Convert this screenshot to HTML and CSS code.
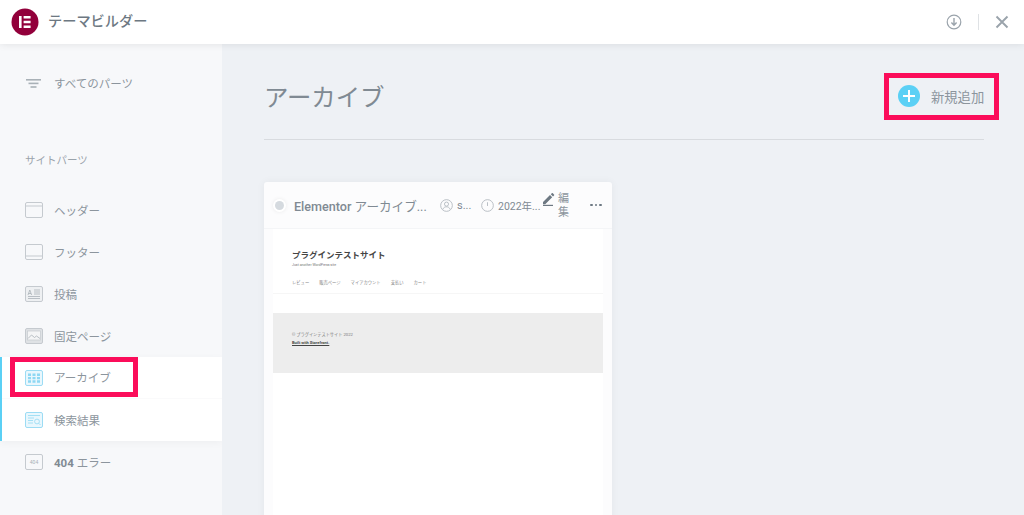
FILE: index.html
```html
<!DOCTYPE html>
<html lang="ja">
<head>
    <meta charset="UTF-8">
    <meta name="viewport" content="width=device-width, initial-scale=1.0">
    <title>テーマビルダー</title>
    <link rel="stylesheet" href="styles.css">
</head>
<body>
    <header class="topbar">
        <div class="logo">
            <svg viewBox="0 0 28 28" width="28" height="28"><circle cx="14" cy="14" r="13.5" fill="#92003b"/><path d="M8 8h2.600v12H8zM12.600 8h7v2.400h-7zM12.600 12.800h7v2.400h-7zM12.600 17.600h7V20h-7z" fill="#fff"/></svg>
        </div>
        <div class="topbar-title">テーマビルダー</div>
        <div class="topbar-actions">
            <svg viewBox="0 0 16 16" width="16" height="16" fill="none" stroke="#9aa3ab" stroke-width="1.2"><circle cx="8" cy="8" r="6.8"/><path d="M8 4v7M5.4 8.6 8 11.2l2.6-2.6" stroke-width="1.4"/></svg>
            <span class="topbar-sep"></span>
            <svg viewBox="0 0 14 14" width="14" height="14" fill="none" stroke="#9aa3ab" stroke-width="1.9"><path d="M1.5 1.5l11 11M12.5 1.5l-11 11"/></svg>
        </div>
    </header>

    <div class="layout">
        <aside class="sidebar">
            <div class="all-parts">
                <svg class="icon-filter" viewBox="0 0 15 9" width="15" height="9" fill="#a9b1b7"><rect x="0" y="0" width="15" height="1.600"/><rect x="2.500" y="3.600" width="10" height="1.600"/><rect x="4.500" y="7.200" width="6" height="1.600"/></svg>
                <span>すべてのパーツ</span>
            </div>
            <div class="side-heading">サイトパーツ</div>

            <a class="side-item">
                <svg class="side-icon" viewBox="0 0 18 16"><rect x=".5" y=".5" width="17" height="15" rx="1.5"/><path d="M.5 4h17"/></svg>
                <span>ヘッダー</span>
            </a>
            <a class="side-item">
                <svg class="side-icon" viewBox="0 0 18 16"><rect x=".5" y=".5" width="17" height="15" rx="1.5"/><path d="M.5 12h17"/></svg>
                <span>フッター</span>
            </a>
            <a class="side-item">
                <svg class="side-icon" viewBox="0 0 18 16"><rect x=".5" y=".5" width="17" height="15" rx="1.5" fill="#eef0f2"/><path d="M3 9l1.8-5 1.8 5M3.6 7.5h2.4M9 4h6M9 6h6M9 8h6M3 10.5h12M3 12.5h12" stroke="#a9b1b7" stroke-width=".8"/></svg>
                <span>投稿</span>
            </a>
            <a class="side-item">
                <svg class="side-icon" viewBox="0 0 18 16"><rect x=".5" y=".5" width="17" height="15" rx="1.5" fill="#dfe2e5"/><rect x="2.5" y="3" width="13" height="9" fill="#f4f5f6" stroke-width=".7"/><path d="M3 10.5l3.5-3.5 3 2.5 2-1.5 3.5 2.5" stroke="#a9b1b7" stroke-width=".8"/></svg>
                <span>固定ページ</span>
            </a>

            <div class="side-group">
                <div class="side-item side-item-active">
                    <svg class="side-icon side-icon-blue" viewBox="0 0 18 16"><rect x=".5" y=".5" width="17" height="15" rx="1.5" fill="#e9f7fd"/><path d="M3 3.5h3v2.4H3zM7.5 3.5h3v2.4h-3zM12 3.5h3v2.4h-3zM3 6.9h3v2.4H3zM7.5 6.9h3v2.4h-3zM12 6.9h3v2.4h-3zM3 10.3h3v2.4H3zM7.5 10.3h3v2.4h-3zM12 10.3h3v2.4h-3z" fill="#8ed8f3" stroke="none"/></svg>
                    <span>アーカイブ</span>
                    <div class="highlight highlight-side"></div>
                </div>
                <div class="side-item">
                    <svg class="side-icon side-icon-blue" viewBox="0 0 18 16"><rect x=".5" y=".5" width="17" height="15" rx="1.5" fill="#e9f7fd"/><path d="M3 3.5h12M3 6h6M3 8.500h5M3 11h5" stroke-width=".9"/><circle cx="12" cy="9.500" r="2.400" stroke-width=".9"/><path d="M13.800 11.300l1.700 1.700" stroke-width=".9"/></svg>
                    <span>検索結果</span>
                </div>
            </div>

            <a class="side-item">
                <svg class="side-icon" viewBox="0 0 18 16"><rect x=".5" y=".5" width="17" height="15" rx="1.5"/><text x="9" y="10.400" class="icon-404">404</text></svg>
                <span><b class="num">404</b> エラー</span>
            </a>
        </aside>

        <main class="content">
            <div class="content-head">
                <h1>アーカイブ</h1>
                <button class="add-btn">
                    <span class="add-circle">
                        <svg viewBox="0 0 12 12" width="12" height="12" stroke="#fff" stroke-width="2"><path d="M6 0v12M0 6h12"/></svg>
                    </span>
                    <span>新規追加</span>
                    <div class="highlight highlight-add"></div>
                </button>
            </div>

            <section class="card">
                <div class="card-head">
                    <span class="status-dot"></span>
                    <span class="card-title"><span class="latin">Elementor</span> アーカイブ...</span>
                    <svg class="meta-icon" viewBox="0 0 14 14" width="13" height="13" fill="none" stroke="#b4bbc1" stroke-width="1"><circle cx="7" cy="7" r="6.300"/><circle cx="7" cy="5.500" r="2.200"/><path d="M3 11.200c.8-2 2.200-2.800 4-2.800s3.200.8 4 2.800"/></svg>
                    <span class="meta meta-author">s...</span>
                    <svg class="meta-icon" viewBox="0 0 14 14" width="13" height="13" fill="none" stroke="#b4bbc1" stroke-width="1"><circle cx="7" cy="7" r="6.300"/><path d="M7 3.500V7.500"/></svg>
                    <span class="meta meta-date">2022年...</span>
                    <span class="edit">
                        <svg viewBox="0 0 12 13" width="12" height="13" fill="#6d7882"><path d="M0 9l7-7 2.200 2.200-7 7H0zM7.800 1.200 8.800.2a.7.7 0 0 1 1 0l1.200 1.200a.7.7 0 0 1 0 1L10 3.400z"/><rect x="0" y="11.800" width="10" height="1.200"/></svg>
                        <span class="edit-label">編集</span>
                    </span>
                    <span class="more">
                        <i></i><i></i><i></i>
                    </span>
                </div>
                <div class="preview">
                    <div class="preview-site">
                        <div class="site-title">プラグインテストサイト</div>
                        <div class="site-tag">Just another WordPress site</div>
                        <nav class="site-nav">
                            <span>レビュー</span><span>販売ページ</span><span>マイアカウント</span><span>支払い</span><span>カート</span>
                        </nav>
                    </div>
                    <div class="site-footer">
                        <div>© プラグインテストサイト 2022</div>
                        <div class="built">Built with Storefront.</div>
                    </div>
                </div>
            </section>
        </main>
    </div>
</body>
</html>
```

FILE: styles.css
```css
* {
    box-sizing: border-box;
}

html, body {
    height: 100%;
}

body {
    margin: 0;
    overflow: hidden;
    font-family: Roboto, "Noto Sans CJK JP", sans-serif;
    color: #6d7882;
    background-color: #eef1f5;
}

.topbar {
    position: relative;
    z-index: 2;
    display: flex;
    align-items: center;
    height: 44px;
    padding: 0 15px 0 11px;
    background: #fff;
    box-shadow: 0 0 8px rgba(0, 0, 0, 0.1);
}

.logo {
    display: flex;
    margin-right: 9px;
}

.topbar-title {
    margin-top: -4px;
    font-size: 14.200px;
    font-weight: 500;
    color: #6d7882;
}

.topbar-actions {
    display: flex;
    align-items: center;
    margin-left: auto;
}

.topbar-sep {
    width: 1px;
    height: 16px;
    margin: 0 16px;
    background: #dfe2e5;
}

.layout {
    display: flex;
    height: 471px;
}

.sidebar {
    flex: 0 0 222px;
    padding-top: 28px;
    background: #f7f8fa;
    font-size: 11.500px;
    color: #8c959d;
}

.all-parts {
    display: flex;
    align-items: center;
    height: 22px;
    padding-left: 26px;
}

.icon-filter {
    margin-right: 13px;
}

.side-heading {
    margin-top: 56px;
    margin-bottom: 17px;
    padding-left: 25px;
    font-size: 10.500px;
    line-height: 22px;
    color: #9aa3ab;
}

.side-item {
    position: relative;
    display: flex;
    align-items: center;
    height: 42px;
    padding-left: 25px;
}

.side-item span {
    margin-top: -1px;
}

.side-icon {
    flex: none;
    width: 18px;
    height: 16px;
    margin-right: 11px;
    fill: none;
    stroke: #c5cacf;
    stroke-width: 1;
}

.side-icon-blue {
    stroke: #9cdcf4;
}

.icon-404 {
    font-size: 5px;
    text-anchor: middle;
    fill: #a9b1b7;
    stroke: none;
}

.num {
    font-weight: 700;
    color: #808a93;
}

.side-group {
    border-left: 2px solid #5bd0f5;
    background: #fff;
    box-shadow: 0 2px 8px rgba(0, 0, 0, 0.04);
}

.side-group .side-item {
    padding-left: 23px;
}

.side-item-active {
    border-bottom: 1px solid #fafafb;
}

.highlight {
    position: absolute;
    border: 5px solid #fb0d5a;
    pointer-events: none;
}

.highlight-side {
    top: 0;
    left: 8px;
    width: 128px;
    height: 40px;
}

.highlight-add {
    top: -1px;
    left: 0;
    width: 115px;
    height: 47px;
}

.content {
    flex: 1;
    padding: 0 40px 0 42px;
    background: #eef1f5;
}

.content-head {
    display: flex;
    align-items: center;
    justify-content: space-between;
    height: 96px;
    margin-bottom: 42px;
    border-bottom: 1px solid #d8dbdf;
}

h1 {
    margin: 7px 0 0;
    font-size: 24.400px;
    font-weight: 400;
    color: #808a93;
}

.add-btn {
    position: relative;
    display: flex;
    align-items: center;
    width: 115px;
    height: 45px;
    margin: 9px -15px 0 0;
    padding: 0 0 0 14px;
    border: none;
    background: none;
    font: inherit;
    font-size: 13.300px;
    color: #8c959d;
}

.add-circle {
    display: flex;
    align-items: center;
    justify-content: center;
    width: 22px;
    height: 22px;
    margin-right: 11px;
    border-radius: 50%;
    background: #5bd0f5;
}

.card {
    width: 348px;
    height: 340px;
    border-radius: 3px;
    background: #fcfcfd;
    box-shadow: 0 0 8px rgba(0, 0, 0, 0.05);
}

.card-head {
    display: flex;
    align-items: center;
    height: 47px;
    padding-left: 11px;
    border-bottom: 1px solid #f4f5f7;
    font-size: 11px;
    color: #808a93;
}

.status-dot {
    flex: none;
    width: 9px;
    height: 9px;
    margin-right: 10px;
    border-radius: 50%;
    background: #d5dadf;
    box-shadow: 0 0 0 2px #fff, 0 0 4px 2px rgba(0, 0, 0, 0.08);
}

.card-title {
    flex: none;
    width: 146px;
    font-size: 12.600px;
}

.latin {
    font-weight: 500;
}

.meta-icon {
    flex: none;
    margin-right: 4px;
}

.meta-author {
    width: 24px;
}

.meta-date {
    width: 45px;
    font-size: 10.500px;
    white-space: nowrap;
}

.edit {
    display: flex;
    align-items: flex-start;
    width: 34px;
    margin-top: 2px;
}

.edit svg {
    flex: none;
    margin-top: 1px;
    margin-right: 3px;
}

.edit-label {
    width: 12px;
    font-size: 11px;
    line-height: 14px;
    color: #8c959d;
}

.more {
    display: flex;
    gap: 2px;
    margin-left: 13px;
}

.more i {
    width: 2.500px;
    height: 2.500px;
    border-radius: 50%;
    background: #6d7882;
}

.preview {
    height: 292px;
    margin: 0 9px;
    padding-top: 9px;
    background: #fff;
}

.preview-site {
    height: 56px;
    padding: 10px 19px 0;
    border-bottom: 1px solid #f6f6f6;
}

.site-title {
    font-size: 8.500px;
    font-weight: 700;
    line-height: 14px;
    color: #444;
}

.site-tag {
    font-size: 3.500px;
    line-height: 6px;
    color: #777;
}

.site-nav {
    display: flex;
    gap: 10px;
    margin-top: 11px;
    font-size: 4.300px;
    line-height: 8px;
    color: #888;
}

.site-footer {
    height: 60px;
    margin-top: 19px;
    padding: 18px 19px 0;
    background: #ededed;
    font-size: 4.200px;
    line-height: 7.500px;
    color: #777;
}

.built {
    font-size: 4px;
    font-weight: 700;
    color: #444;
    text-decoration: underline;
}
```
